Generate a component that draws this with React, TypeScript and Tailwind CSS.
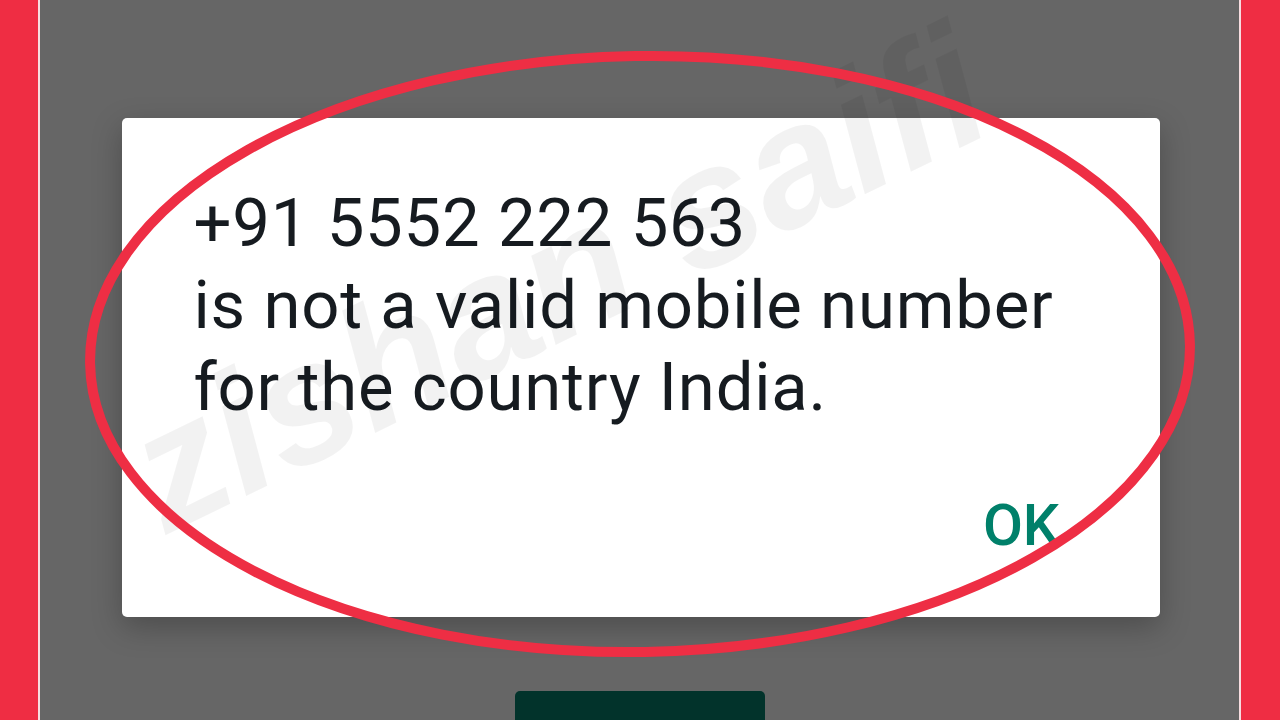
export default function App() {
  return (
    <div className="relative w-[1280px] h-[720px] overflow-hidden flex bg-[#666666]" style={{ fontFamily: 'Roboto, "Liberation Sans", sans-serif' }}>
      <div className="w-[38px] shrink-0 bg-[#ef2d43]" />
      <div className="w-[2px] shrink-0 bg-[#f7dde0]" />
      <main className="flex-1 flex flex-col items-center pt-[118px]">
        <div className="shrink-0 w-[1038px] h-[499px] bg-white rounded-[5px] shadow-[0_10px_30px_rgba(0,0,0,0.25)] flex flex-col pl-[72px] pr-[100px] pt-[64px] ml-[2px]">
          <p className="text-[67px] leading-[82px] text-[#161b20] tracking-[0.8px] whitespace-nowrap">
            +91 5552 222 563
            <br />
            is not a valid mobile number
            <br />
            for the country India.
          </p>
          <div className="mt-auto mb-[62px] flex justify-end">
            <button className="text-[58px] leading-[60px] font-medium text-[#00806a]">OK</button>
          </div>
        </div>
        <div className="shrink-0 mt-[74px] w-[250px] h-[40px] bg-[#02332b] rounded-t-[5px]" />
      </main>
      <div className="w-[2px] shrink-0 bg-[#f7dde0]" />
      <div className="w-[39px] shrink-0 bg-[#ef2d43]" />

      {/* watermark */}
      <div className="pointer-events-none absolute left-[140px] top-[395px] -rotate-[26deg] origin-left text-[172px] font-bold italic leading-none text-black/[0.05] whitespace-nowrap" style={{ fontFamily: '"Liberation Sans", Arial, sans-serif' }}>
        zishan saifi
      </div>

      {/* red ring */}
      <svg className="pointer-events-none absolute inset-0" width="1280" height="720" viewBox="0 0 1280 720">
        <ellipse cx="640" cy="354" rx="550" ry="298" fill="none" stroke="#ee2e44" strokeWidth="10" transform="rotate(-1 640 354)" />
      </svg>
    </div>
  );
}
